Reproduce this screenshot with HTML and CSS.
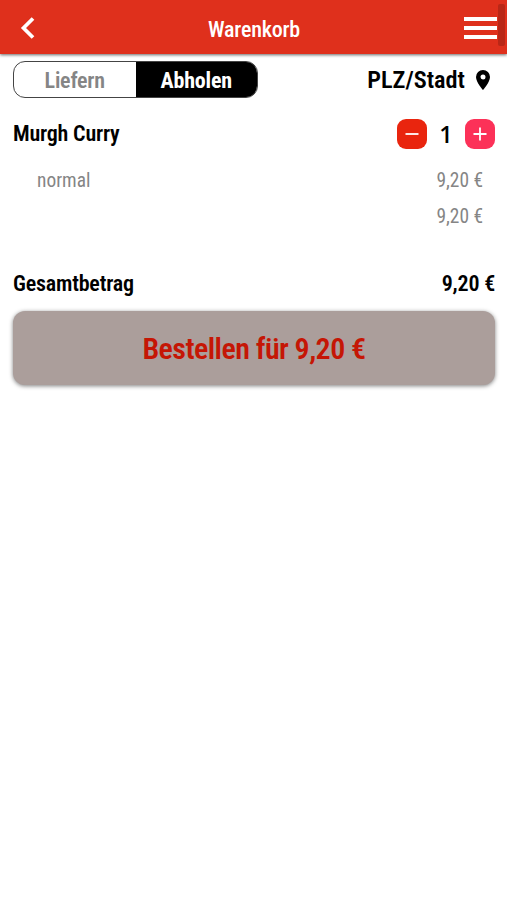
FILE: index.html
```html
<!DOCTYPE html>
<html lang="de">
  <head>
    <meta charset="utf-8">
    <meta name="viewport" content="width=device-width, initial-scale=1">
    <title>Warenkorb</title>
    <link rel="stylesheet" href="styles.css">
  </head>
  <body>
    <header class="topbar">
      <button class="back" aria-label="Zurück">
        <svg width="15" height="22" viewBox="0 0 15 22"><path d="M13 1.500 L3.500 11 L13 20.500" fill="none" stroke="#fff" stroke-width="3.700"/></svg>
      </button>
      <h1>Warenkorb</h1>
      <button class="menu" aria-label="Menü"><span></span><span></span><span></span></button>
      <div class="scrollbar"></div>
    </header>
    <main>
      <div class="options">
        <div class="toggle">
          <button>Liefern</button>
          <button class="active">Abholen</button>
        </div>
        <div class="place">
          <span>PLZ/Stadt</span>
          <svg width="14" height="20" viewBox="0 0 14 20"><path fill="#000" fill-rule="evenodd" d="M7 0a7 7 0 0 0-7 7c0 5.200 7 13 7 13s7-7.800 7-13a7 7 0 0 0-7-7zm0 4.500a2.500 2.500 0 1 1 0 5a2.500 2.500 0 0 1 0-5z"/></svg>
        </div>
      </div>
      <div class="item">
        <span class="name">Murgh Curry</span>
        <div class="amount">
          <button class="minus" aria-label="Weniger"><svg width="14" height="14" viewBox="0 0 14 14"><path d="M0.500 7h13" stroke="#fff" stroke-width="1.800"/></svg></button>
          <span class="count">1</span>
          <button class="plus" aria-label="Mehr"><svg width="14" height="14" viewBox="0 0 14 14"><path d="M0.500 7h13M7 0.500v13" stroke="#fff" stroke-width="1.800"/></svg></button>
        </div>
      </div>
      <div class="detail"><span>normal</span><span>9,20 €</span></div>
      <div class="detail"><span></span><span>9,20 €</span></div>
      <div class="total"><span>Gesamtbetrag</span><span>9,20 €</span></div>
      <button class="order">Bestellen für 9,20 €</button>
    </main>
  </body>
</html>
```
FILE: styles.css
```css
body {
  margin: 0;
  background: #fff;
  color: #000;
  font-family: "Roboto Condensed", Roboto, sans-serif;
  font-stretch: condensed;
}
button {
  border: none;
  padding: 0;
  background: none;
  font: inherit;
  color: inherit;
  cursor: pointer;
}
svg {
  display: block;
}

.topbar {
  position: relative;
  box-sizing: border-box;
  height: 54px;
  padding: 2px 10px 0 20px;
  background: #df301c;
  box-shadow: 0 1px 3px rgba(0, 0, 0, 0.6);
  color: #fff;
  display: grid;
  grid-template-columns: 34px 1fr 33px;
  align-items: center;
}
.topbar h1 {
  margin: 0;
  padding: 3px 10px 0 0;
  font-size: 22px;
  font-weight: 500;
  letter-spacing: -0.2px;
  line-height: 30px;
  text-align: center;
}
.menu {
  display: flex;
  flex-direction: column;
  gap: 5px;
}
.menu span {
  width: 33px;
  height: 4px;
  background: #fff;
}
.scrollbar {
  position: absolute;
  top: 4px;
  right: 2px;
  width: 7px;
  height: 42px;
  border-radius: 2px;
  background: #b92717;
}

main {
  padding: 7px 12px 20px 13px;
}
.options, .item, .detail, .total {
  display: flex;
  align-items: center;
  justify-content: space-between;
}
.options {
  height: 37px;
}
.toggle {
  display: flex;
  box-sizing: border-box;
  width: 245px;
  height: 37px;
  border: 1px solid #444;
  border-radius: 12px;
  overflow: hidden;
}
.toggle button {
  flex: 1;
  padding-top: 2px;
  color: #858585;
  font-size: 22px;
  font-weight: 600;
  letter-spacing: -0.2px;
}
.toggle .active {
  background: #000;
  color: #fff;
  font-weight: 700;
}
.place {
  display: flex;
  align-items: center;
  gap: 11px;
  padding-right: 5px;
  font-size: 24.3px;
  font-weight: 600;
}

.item {
  height: 30px;
  margin-top: 21px;
}
.name, .total {
  font-size: 22px;
  font-weight: 600;
  letter-spacing: -0.2px;
}
.name {
  line-height: 30px;
}
.amount {
  display: flex;
  align-items: center;
}
.amount button {
  display: flex;
  align-items: center;
  justify-content: center;
  width: 30px;
  height: 30px;
  border-radius: 9px;
}
.minus {
  background: #e9250e;
}
.plus {
  background: #fc3158;
}
.count {
  width: 38px;
  font-family: "Open Sans", sans-serif;
  font-stretch: normal;
  font-size: 23.5px;
  font-weight: 600;
  line-height: 30px;
  text-align: center;
}

.detail {
  height: 36px;
  padding: 0 12px 0 24px;
  color: #858585;
  font-size: 19.4px;
}
.item + .detail {
  margin-top: 13px;
}
.total {
  height: 30px;
  margin-top: 34px;
}
.order {
  display: block;
  width: 100%;
  height: 74px;
  margin-top: 13px;
  padding-top: 1px;
  border-radius: 12px;
  background: #ab9e9b;
  box-shadow: 0 1px 4px rgba(0, 0, 0, 0.5);
  color: #c51605;
  font-size: 30px;
  font-weight: 600;
  letter-spacing: -0.55px;
}
```
